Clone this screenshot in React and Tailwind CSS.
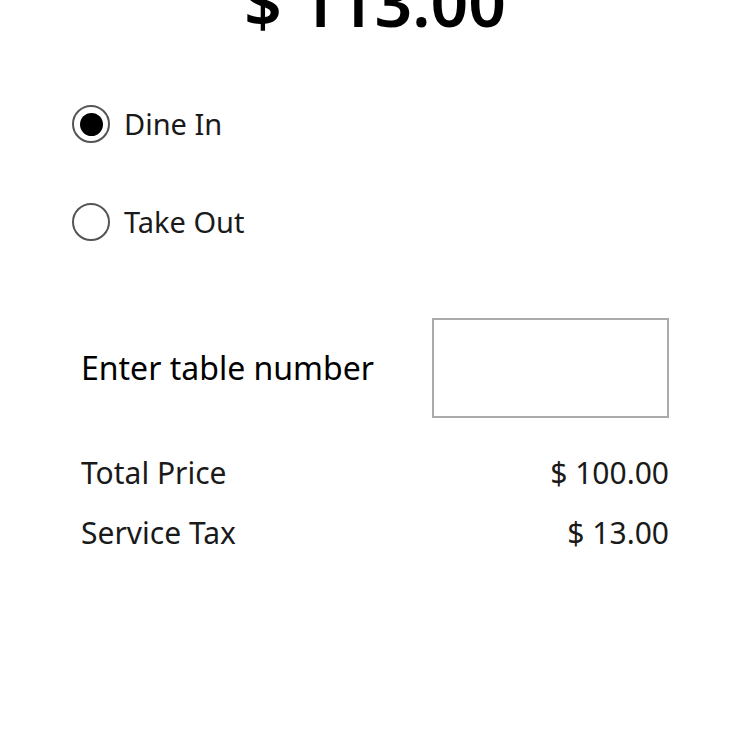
import { useState } from "react";

const Radio = ({ checked, label, onClick }) => (
  <label className="flex items-center gap-[14px] cursor-pointer" onClick={onClick}>
    <span className="w-[38px] h-[38px] rounded-full border-2 border-[#555] flex items-center justify-center">
      {checked && <span className="w-[23px] h-[23px] rounded-full bg-black" />}
    </span>
    <span className="text-[29px] leading-[38px] text-[#1a1a1a]">{label}</span>
  </label>
);

export default function App() {
  const [mode, setMode] = useState("dine");

  return (
    <div className="w-[750px] h-[750px] bg-white overflow-hidden font-['Noto_Sans',sans-serif] text-[#1a1a1a]">
      <div className="text-center text-[66px] font-semibold leading-none mt-[-32px] text-black">
        $ 113.00
      </div>

      <div className="pl-[72px] mt-[71px] flex flex-col gap-[60px]">
        <Radio checked={mode === "dine"} label="Dine In" onClick={() => setMode("dine")} />
        <Radio checked={mode === "take"} label="Take Out" onClick={() => setMode("take")} />
      </div>

      <div className="pl-[81px] pr-[81px] mt-[77px]">
        {mode === "dine" && (
          <div className="flex items-center justify-between">
            <span className="text-[32px] text-black">Enter table number</span>
            <input
              type="text"
              className="w-[237px] h-[100px] border-2 border-[#aaa] outline-none px-2 text-[28px]"
            />
          </div>
        )}

        <div className="mt-[35px] flex flex-col gap-[20px] text-[30px] leading-[40px]">
          <div className="flex justify-between">
            <span>Total Price</span>
            <span>$ 100.00</span>
          </div>
          <div className="flex justify-between">
            <span>Service Tax</span>
            <span>$ 13.00</span>
          </div>
        </div>
      </div>
    </div>
  );
}
